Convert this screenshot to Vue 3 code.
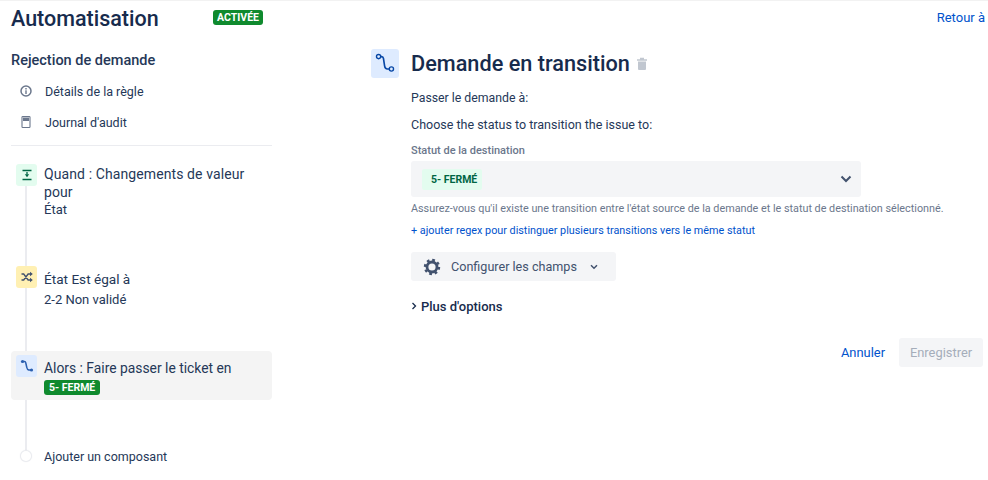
<template>
  <div class="page">
    <header class="top">
      <h1>Automatisation</h1>
      <span class="lozenge active">ACTIVÉE</span>
      <a class="back">Retour à</a>
    </header>
    <div class="cols">
      <aside class="side">
        <h2>Rejection de demande</h2>
        <div class="nav first">
          <svg class="navicon" viewBox="0 0 14 14"><circle cx="7" cy="7" r="5" fill="none" stroke="#6b778c" stroke-width="1.500"/><rect x="6.300" y="6.300" width="1.400" height="3.700" fill="#6b778c"/><rect x="6.300" y="4" width="1.400" height="1.500" fill="#6b778c"/></svg>
          <span>Détails de la règle</span>
        </div>
        <div class="nav">
          <svg class="navicon" viewBox="0 0 14 14"><rect x="3" y="1.500" width="8" height="11" rx="0.800" fill="none" stroke="#6b778c" stroke-width="1.100"/><rect x="4" y="2.500" width="6" height="3.500" fill="#6b778c"/></svg>
          <span>Journal d'audit</span>
        </div>
        <hr />
        <div class="timeline">
          <div class="line"></div>
          <div class="step s1">
            <span class="badge green">
              <svg viewBox="0 0 14 14"><path d="M2.500 2.500h9M2.500 11.500h9" stroke="#006644" stroke-width="1.300"/><path d="M7 4v2.500" stroke="#006644" stroke-width="1.300"/><path d="M4.800 6.300h4.400L7 9.300z" fill="#006644"/></svg>
            </span>
            <div class="txt"><div class="t">Quand : Changements de valeur pour</div><div class="sub">État</div></div>
          </div>
          <div class="step s2">
            <span class="badge yellow">
              <svg viewBox="0 0 14 14"><path d="M1.500 4h2.200l4.400 6h2.400M1.500 10h2.200l4.400-6h2.400" fill="none" stroke="#42526e" stroke-width="1.300"/><path d="M10 1.800 12.800 4 10 6.200zM10 7.800 12.800 10 10 12.200z" fill="#42526e"/></svg>
            </span>
            <div class="txt"><div class="t">État Est égal à</div><div class="sub s2sub">2-2 Non validé</div></div>
          </div>
          <div class="step s3">
            <span class="badge blue">
              <svg viewBox="0 0 14 14"><circle cx="2.500" cy="2.500" r="1.600" fill="#2a5fb0"/><circle cx="11.500" cy="11" r="1.600" fill="#2a5fb0"/><path d="M3 2.500h1.500q1 0 1.300 1.500l1 4.500q.3 2 2 2.500h2" fill="none" stroke="#2a5fb0" stroke-width="1.500"/></svg>
            </span>
            <div class="txt"><div class="t">Alors : Faire passer le ticket en</div><span class="lozenge closed">5- FERMÉ</span></div>
          </div>
          <div class="step s4">
            <span class="dot"></span>
            <div class="txt"><div class="t">Ajouter un composant</div></div>
          </div>
        </div>
      </aside>
      <main class="main">
        <div class="head">
          <span class="bigbadge">
            <svg viewBox="0 0 24 24"><circle cx="5" cy="5" r="2.300" fill="none" stroke="#0747a6" stroke-width="1.500"/><circle cx="19" cy="18.500" r="2.300" fill="none" stroke="#0747a6" stroke-width="1.500"/><path d="M7.300 5h1q1.700 0 2 2l1.300 8.500q.4 3 3 3h2.100" fill="none" stroke="#0747a6" stroke-width="1.800"/></svg>
          </span>
          <h3>Demande en transition</h3>
          <svg class="trash" viewBox="0 0 12 14"><path d="M1 2.300h10v1.500H1zM4 .8h4v1.500H4zM2 4.600h8V12a1 1 0 0 1-1 1H3a1 1 0 0 1-1-1z" fill="#c1c7d0"/></svg>
        </div>
        <div class="body">
          <p class="p1">Passer le demande à:</p>
          <p class="p2">Choose the status to transition the issue to:</p>
          <label>Statut de la destination</label>
          <div class="select">
            <span class="tag">5- FERMÉ</span>
            <svg class="chev" viewBox="0 0 12 8"><path d="M1.500 1.500 6 6l4.500-4.500" fill="none" stroke="#42526e" stroke-width="2"/></svg>
          </div>
          <p class="help">Assurez-vous qu'il existe une transition entre l'état source de la demande et le statut de destination sélectionné.</p>
          <a class="regex">+ ajouter regex pour distinguer plusieurs transitions vers le même statut</a>
          <div class="config">
            <svg class="gear" viewBox="0 0 18 18"><circle cx="9" cy="9" r="5" fill="none" stroke="#42526e" stroke-width="2.800"/><circle cx="9" cy="9" r="7" fill="none" stroke="#42526e" stroke-width="2.400" stroke-dasharray="2.700 2.798"/></svg>
            <span>Configurer les champs</span>
            <svg class="chev2" viewBox="0 0 8 6"><path d="M1 1.200 4 4.200l3-3" fill="none" stroke="#42526e" stroke-width="1.500"/></svg>
          </div>
          <div class="more">
            <svg viewBox="0 0 6 8"><path d="M1.500 1 4.500 4l-3 3" fill="none" stroke="#172b4d" stroke-width="1.300"/></svg>
            <span>Plus d'options</span>
          </div>
          <div class="actions">
            <a class="cancel">Annuler</a>
            <button>Enregistrer</button>
          </div>
        </div>
      </main>
    </div>
  </div>
</template>

<script setup>
</script>

<style>
body { margin: 0; background: #fff; }
</style>

<style scoped>
.page {
  width: 988px;
  height: 480px;
  overflow: hidden;
  box-sizing: border-box;
  border-top: 1px solid #f2f2f2;
  font-family: Roboto, "Noto Sans", sans-serif;
  color: #172b4d;
  font-size: 12.500px;
  position: relative;
}
.top { display: flex; align-items: flex-start; padding: 4px 3px 0 11px; height: 40px; box-sizing: border-box; }
h1 { margin: 0; font-size: 21.500px; font-weight: 500; line-height: 28px; width: 202px; }
.lozenge { display: inline-block; background: #0f8a2e; color: #fff; font-weight: 700; font-size: 10.500px; border-radius: 3px; line-height: 15px; height: 15px; text-align: center; }
.active { width: 50px; margin-top: 5px; }
.back { margin-left: auto; color: #0052cc; font-size: 13px; line-height: 16px; margin-top: 5px; }
.cols { display: flex; }
.side { width: 261px; margin-left: 11px; flex: none; }
h2 { margin: 11px 0 0; font-size: 14.500px; font-weight: 500; line-height: 18px; color: #253858; }
.nav { display: flex; align-items: center; height: 31px; padding-left: 8px; gap: 12px; font-size: 12.500px; color: #253858; }
.first { margin-top: 6px; }
.navicon { width: 14px; height: 14px; flex: none; margin-top: -1px; }
hr { border: 0; border-top: 1px solid #ebecf0; margin: 7px 0 0; }
.timeline { position: relative; padding-top: 18px; }
.line { position: absolute; left: 14px; top: 30px; width: 2px; height: 276px; background: #ebecf0; }
.step { position: relative; display: flex; gap: 7px; padding-left: 5px; border-radius: 4px; }
.badge { width: 21px; height: 22px; border-radius: 3px; flex: none; display: flex; align-items: center; justify-content: center; }
.badge svg { width: 14px; height: 14px; }
.green { background: #e3fcef; }
.yellow { background: #fff0b3; }
.blue { background: #deebff; }
.txt { font-size: 13px; line-height: 17px; padding-top: 3px; color: #253858; }
.t { font-size: 13.600px; line-height: 18px; }
.s1 .txt { padding-top: 1px; }
.s1 .t { font-size: 14px; letter-spacing: 0.100px; }
.s1 { height: 102px; width: 236px; }
.s2 { height: 85px; }
.s2 .txt, .s3 .txt { padding-top: 4px; }
.s2sub { margin-top: 3px; }
.s3 { height: 49px; background: #f4f4f4; padding-top: 4px; box-sizing: border-box; }
.s3 .t { font-size: 13.850px; }
.closed { padding: 0 5px; margin-top: 3px; display: block; width: max-content; height: 15px; }
.s4 { margin-top: 45px; height: 24px; }
.s4 .t { font-size: 12.500px; }
.dot { width: 10px; height: 10px; border-radius: 50%; background: #fff; box-shadow: 0 0 0 1px #ebecf0, 0 0 2px #c1c7d0; margin: 6px 6px 0 5px; flex: none; }
.main { margin-left: 99px; width: 612px; flex: none; }
.head { display: flex; align-items: center; height: 30px; margin-top: 7px; }
.bigbadge { width: 28px; height: 29px; background: #deebff; border-radius: 3px; display: flex; align-items: center; justify-content: center; margin-right: 12px; flex: none; }
.bigbadge svg { width: 22px; height: 22px; }
h3 { margin: 2px 0 0; font-size: 21.700px; font-weight: 500; color: #172b4d; line-height: 28px; }
.trash { width: 12px; height: 14px; margin-left: 6px; margin-top: 1px; }
.body { margin-left: 40px; width: 572px; }
.p1, .p2 { margin: 0; line-height: 16px; color: #253858; }
.p1 { margin-top: 12px; font-size: 12.300px; }
.p2 { margin-top: 11px; font-size: 12.500px; }
label { display: block; margin-top: 11px; font-size: 11px; font-weight: 500; color: #6b778c; line-height: 14px; }
.select { margin-top: 3px; width: 450px; height: 36px; background: #f4f5f7; border-radius: 3px; display: flex; align-items: center; padding-left: 11px; box-sizing: border-box; position: relative; }
.tag { background: #e3fcef; color: #006644; font-weight: 700; font-size: 10.500px; padding: 0 5px 0 9px; height: 21px; line-height: 21px; border-radius: 2px; }
.chev { width: 12px; height: 8px; margin-left: auto; margin-right: 9px; }
.help { margin: 5px 0 0; font-size: 10.800px; line-height: 14px; color: #6b778c; white-space: nowrap; }
.regex { display: block; margin-top: 8px; font-size: 10.800px; line-height: 14px; color: #0052cc; white-space: nowrap; }
.config { margin-top: 14px; width: 205px; height: 29px; background: #f4f5f7; border-radius: 3px; display: flex; align-items: center; box-sizing: border-box; padding-left: 12px; color: #42526e; font-size: 12.600px; }
.gear { width: 18px; height: 18px; flex: none; }
.config span { margin-left: 10px; }
.chev2 { width: 8px; height: 6px; margin-left: 13px; }
.more { display: flex; align-items: center; margin-top: 18px; gap: 4px; font-size: 13px; font-weight: 500; color: #172b4d; line-height: 16px; }
.more svg { width: 6px; height: 8px; margin-top: -2px; }
.actions { display: flex; align-items: center; justify-content: flex-end; margin-top: 23px; width: 572px; gap: 14px; }
.cancel { color: #0052cc; font-size: 12.900px; }
button { border: 0; background: #f4f5f7; color: #a5adba; height: 29px; width: 84px; border-radius: 3px; font: inherit; font-size: 12.900px; padding: 0; }
</style>
